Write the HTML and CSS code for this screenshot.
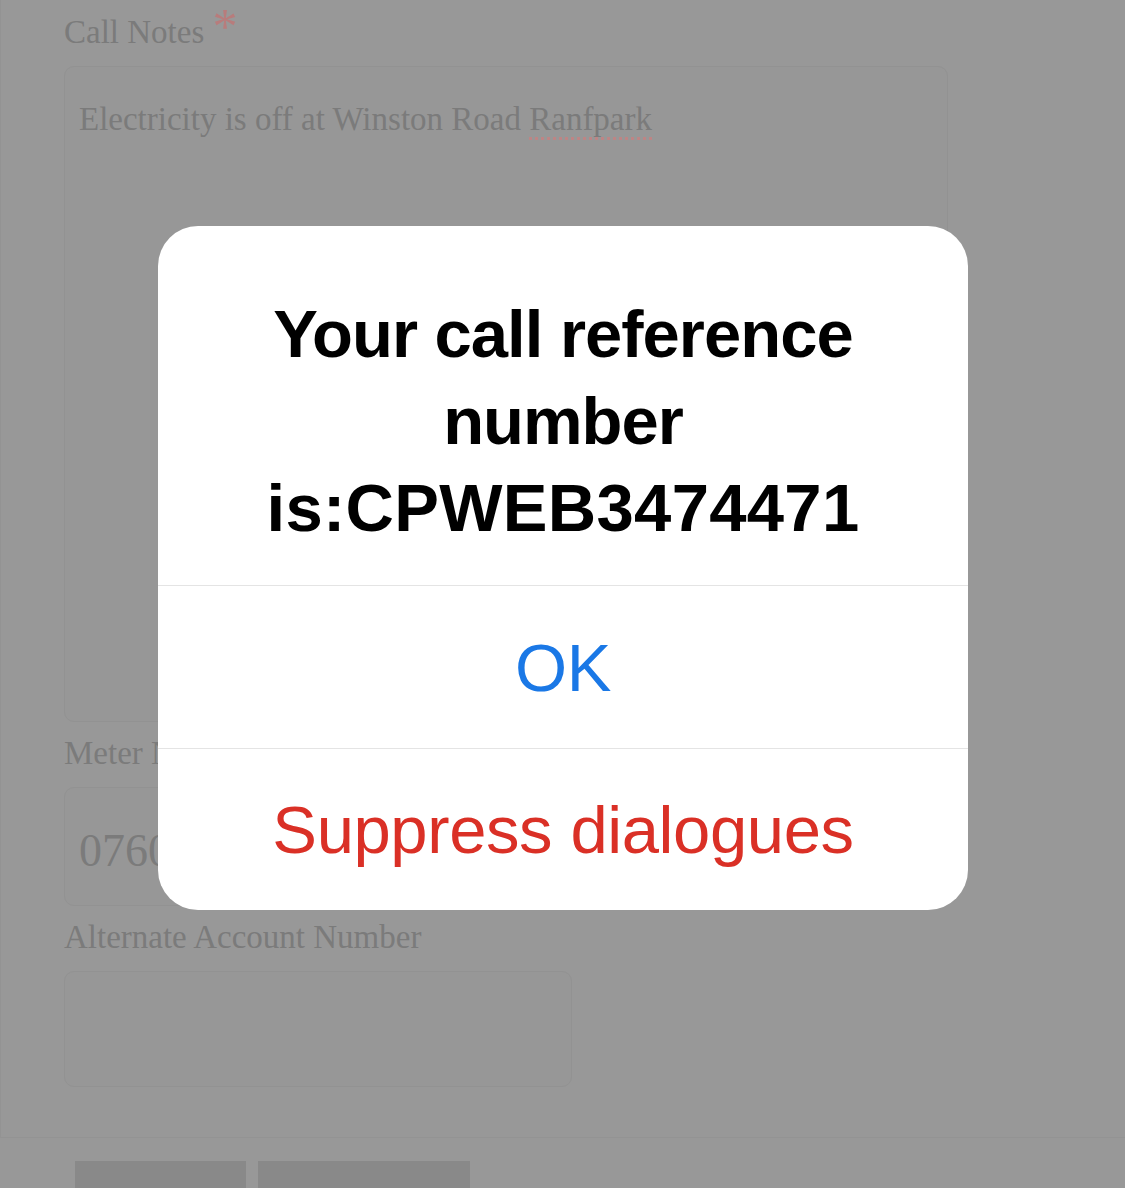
FILE: index.html
```html
<!DOCTYPE html>
<html lang="en">
<head>
<meta charset="utf-8">
<title>Call reference</title>
<link rel="stylesheet" href="styles.css">
</head>
<body>
<div class="page">
  <form class="form">
    <div class="field">
      <label class="label">Call Notes <span class="req">*</span></label>
      <div class="textarea">Electricity is off at Winston Road <span class="spell">Ranfpark</span></div>
    </div>
    <div class="field">
      <label class="label">Meter Number</label>
      <div class="input input-meter">07601234567</div>
    </div>
    <div class="field">
      <label class="label">Alternate Account Number</label>
      <div class="input input-alt"></div>
    </div>
  </form>
  <div class="actions">
    <div class="btn btn-a" role="button" aria-label="Submit"></div>
    <div class="btn btn-b" role="button" aria-label="Cancel"></div>
  </div>
</div>

<div class="dialog" role="alertdialog">
  <div class="dialog-title">Your call reference number <span class="ref-num">is:CPWEB3474471</span></div>
  <div class="dialog-btn ok">OK</div>
  <div class="dialog-btn suppress">Suppress dialogues</div>
</div>
</body>
</html>
```

FILE: styles.css
```css
html, body {
  margin: 0;
  padding: 0;
  background: #989898;
  height: 100%;
  overflow: hidden;
}

.page {
  font-family: "Liberation Serif", "Times New Roman", serif;
  color: #7b7b7b;
}

.form {
  border-left: 1px solid #939393;
  border-bottom: 1px solid #939393;
  padding: 13px 0 50px 63px;
}

.field {
  display: flex;
  flex-direction: column;
  align-items: flex-start;
}

.label {
  display: block;
  font-size: 33px;
  line-height: 38px;
  margin-bottom: 15px;
}

.req {
  font-size: 50px;
  line-height: 0;
  color: #b87c7c;
}

.textarea {
  box-sizing: border-box;
  width: 884px;
  height: 656px;
  border: 1px solid #929292;
  border-radius: 10px;
  background: #979797;
  padding: 33px 14px;
  font-size: 33px;
  line-height: 38px;
  margin-bottom: 12px;
}

.spell {
  border-bottom: 3px dotted #bd8585;
}

.input {
  box-sizing: border-box;
  width: 508px;
  border: 1px solid #929292;
  border-radius: 10px;
  background: #979797;
  padding: 0 14px;
  display: flex;
  align-items: center;
  margin-bottom: 12px;
  white-space: nowrap;
  overflow: hidden;
}

.input-meter {
  height: 119px;
  font-size: 46px;
  padding-top: 8px;
}

.input-alt {
  height: 116px;
  margin-bottom: 0;
}

.actions {
  display: flex;
  gap: 12px;
  padding: 23px 0 0 75px;
}

.btn {
  background-color: #898989;
  height: 90px;
}

.btn-a { width: 171px; }
.btn-b { width: 212px; }

.dialog {
  position: fixed;
  left: 158px;
  top: 226px;
  width: 810px;
  height: 684px;
  background: #ffffff;
  border-radius: 40px;
  overflow: hidden;
  font-family: "Liberation Sans", Arial, Helvetica, sans-serif;
  display: flex;
  flex-direction: column;
}

.dialog-title {
  box-sizing: border-box;
  height: 359px;
  padding: 64px 80px 34px;
  text-align: center;
  font-weight: bold;
  font-size: 67px;
  line-height: 87px;
  letter-spacing: -1px;
  color: #000000;
}

.ref-num {
  letter-spacing: 0.3px;
}

.dialog-btn {
  border-top: 1px solid #e4e4e4;
  display: flex;
  align-items: center;
  justify-content: center;
  font-size: 67px;
  letter-spacing: -0.4px;
}

.ok {
  height: 162px;
  color: #1a78e6;
}

.suppress {
  height: 161px;
  color: #da3026;
}
```
